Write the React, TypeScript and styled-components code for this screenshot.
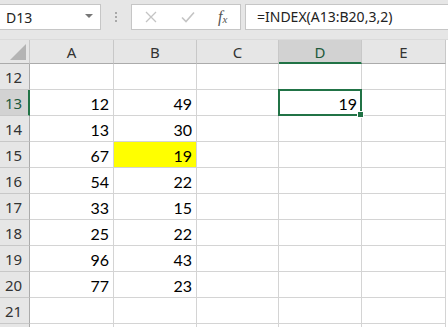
import { createGlobalStyle, styled } from 'styled-components'

const GlobalStyle = createGlobalStyle`
  html, body {
    margin: 0;
    padding: 0;
    background: #ffffff;
    overflow: hidden;
  }
  body {
    width: 448px;
    height: 327px;
    font-family: 'Noto Sans', 'Liberation Sans', sans-serif;
  }
`

const columns = ['A', 'B', 'C', 'D', 'E']
const widths = [84, 83, 82, 83, 84]

const data: Record<number, [string, string]> = {
  13: ['12', '49'],
  14: ['13', '30'],
  15: ['67', '19'],
  16: ['54', '22'],
  17: ['33', '15'],
  18: ['25', '22'],
  19: ['96', '43'],
  20: ['77', '23'],
}

// row 22 only peeks in at the bottom edge, so its label is left out
const rows = [12, 13, 14, 15, 16, 17, 18, 19, 20, 21, 0]

const App = () => {
  return (
    <Page>
      <GlobalStyle />
      <Toolbar>
        <NameBox>
          <NameText>D13</NameText>
          <DropArrow />
        </NameBox>
        <Grip>
          <span />
          <span />
          <span />
        </Grip>
        <ButtonBox>
          <IconButton>
            <svg width="12" height="12" viewBox="0 0 12 12">
              <path d="M1 1 L11 11 M11 1 L1 11" stroke="#c4c4c4" strokeWidth="1.3" fill="none" />
            </svg>
          </IconButton>
          <IconButton>
            <svg width="14" height="12" viewBox="0 0 14 12">
              <path d="M1 6.5 L5 10.5 L13 1.5" stroke="#c4c4c4" strokeWidth="1.6" fill="none" />
            </svg>
          </IconButton>
          <FxLabel>
            f<sub>x</sub>
          </FxLabel>
        </ButtonBox>
        <FormulaInput>=INDEX(A13:B20,3,2)</FormulaInput>
      </Toolbar>

      <Sheet>
        <Corner>
          <svg width="16" height="16" viewBox="0 0 16 16">
            <polygon points="16,0 16,16 0,16" fill="#b4b4b4" />
          </svg>
        </Corner>
        {columns.map((c, i) => (
          <ColHeader key={c} $width={widths[i]} $active={c === 'D'}>
            {c}
          </ColHeader>
        ))}
        <Filler />

        {rows.map((r, idx) => (
          <Row key={idx}>
            <RowHeader $active={r === 13}>{r > 0 ? r : ''}</RowHeader>
            {columns.map((c, i) => {
              let value = ''
              if (data[r] && i < 2) value = data[r][i]
              if (r === 13 && c === 'D') value = '19'
              return (
                <Cell
                  key={c}
                  $width={widths[i]}
                  $highlight={r === 15 && c === 'B'}
                  $selected={r === 13 && c === 'D'}
                >
                  {value}
                </Cell>
              )
            })}
            <Filler />
          </Row>
        ))}
      </Sheet>
    </Page>
  )
}

const Page = styled.div`
  width: 448px;
  height: 327px;
  overflow: hidden;
  background: #ffffff;
`

const Toolbar = styled.div`
  height: 40px;
  box-sizing: border-box;
  background: #e6e6e6;
  display: flex;
  align-items: flex-start;
  padding-top: 4px;
  border-bottom: 1px solid #dadada;
`

const NameBox = styled.div`
  width: 101px;
  height: 26px;
  box-sizing: border-box;
  background: #ffffff;
  border: 1px solid #c6c6c6;
  border-left: none;
  display: flex;
  align-items: center;
  justify-content: space-between;
  padding: 0 7px 0 6px;
`

const NameText = styled.span`
  font-size: 14px;
  color: #222222;
`

const DropArrow = styled.span`
  width: 0;
  height: 0;
  border-left: 4px solid transparent;
  border-right: 4px solid transparent;
  border-top: 4px solid #777777;
  margin-top: -2px;
`

const Grip = styled.div`
  width: 30px;
  height: 26px;
  display: flex;
  flex-direction: column;
  align-items: center;
  justify-content: center;
  gap: 2px;

  span {
    width: 2px;
    height: 2px;
    background: #a8a8a8;
  }
`

const ButtonBox = styled.div`
  width: 110px;
  height: 26px;
  box-sizing: border-box;
  background: #ffffff;
  border: 1px solid #c6c6c6;
  display: flex;
  align-items: center;
  padding-left: 13px;
`

const IconButton = styled.span`
  width: 36px;
  display: flex;
  align-items: center;
  justify-content: flex-start;
`

const FxLabel = styled.span`
  font-family: 'Liberation Serif', 'DejaVu Serif', serif;
  font-style: italic;
  font-size: 16px;
  color: #555555;
  margin-left: 1px;

  sub {
    font-size: 11px;
    vertical-align: -1px;
  }
`

const FormulaInput = styled.div`
  flex: 1;
  margin-left: 4px;
  height: 26px;
  box-sizing: border-box;
  background: #ffffff;
  border: 1px solid #c6c6c6;
  border-right: none;
  padding-left: 11px;
  font-size: 14px;
  line-height: 24px;
  color: #222222;
`

const Sheet = styled.div`
  display: flex;
  flex-wrap: wrap;
  width: 448px;
`

const Row = styled.div`
  display: flex;
  width: 448px;
`

const Corner = styled.div`
  width: 30px;
  height: 24px;
  box-sizing: border-box;
  background: #e6e6e6;
  border-right: 1px solid #c8c8c8;
  border-bottom: 1px solid #ababab;
  display: flex;
  align-items: flex-end;
  justify-content: flex-end;
  padding: 0 3px 3px 0;
`

const ColHeader = styled.div<{ $width: number; $active?: boolean }>`
  width: ${(p) => p.$width}px;
  height: 24px;
  box-sizing: border-box;
  background: ${(p) => (p.$active ? '#d2d2d2' : '#e6e6e6')};
  border-right: 1px solid #c8c8c8;
  border-bottom: ${(p) => (p.$active ? '2px solid #217346' : '1px solid #ababab')};
  color: ${(p) => (p.$active ? '#215a3b' : '#333333')};
  font-size: 15px;
  display: flex;
  align-items: center;
  justify-content: center;
  padding-top: ${(p) => (p.$active ? '1px' : '0')};
`

const Filler = styled.div`
  flex: 1;
  height: 24px;
  background: #ffffff;
`

const RowHeader = styled.div<{ $active?: boolean }>`
  width: 30px;
  height: 26px;
  box-sizing: border-box;
  background: ${(p) => (p.$active ? '#d2d2d2' : '#e6e6e6')};
  border-right: ${(p) => (p.$active ? '2px solid #217346' : '1px solid #ababab')};
  border-bottom: 1px solid #c8c8c8;
  color: ${(p) => (p.$active ? '#215a3b' : '#333333')};
  font-size: 15px;
  padding-left: 5px;
  display: flex;
  align-items: center;
`

const Cell = styled.div<{ $width: number; $highlight?: boolean; $selected?: boolean }>`
  position: relative;
  width: ${(p) => p.$width}px;
  height: 26px;
  box-sizing: border-box;
  background: ${(p) => (p.$highlight ? '#ffff00' : '#ffffff')};
  border-right: 1px solid #d4d4d4;
  border-bottom: 1px solid #d4d4d4;
  font-family: 'Lato', 'Noto Sans', sans-serif;
  font-size: 16px;
  color: #000000;
  display: flex;
  align-items: center;
  justify-content: flex-end;
  padding: 2px 4px 0 0;

  ${(p) =>
    p.$selected &&
    `
    &::after {
      content: '';
      position: absolute;
      left: -1px;
      top: -1px;
      right: -1px;
      bottom: -1px;
      border: 2px solid #217346;
    }
    &::before {
      content: '';
      position: absolute;
      right: -3px;
      bottom: -3px;
      width: 5px;
      height: 5px;
      background: #217346;
      border: 1px solid #ffffff;
      z-index: 1;
    }
  `}
`

export default App
